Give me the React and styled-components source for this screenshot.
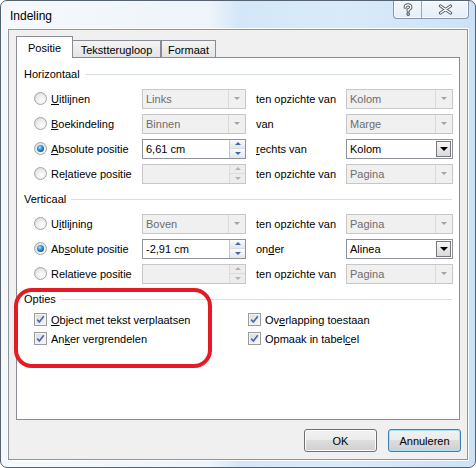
import styled, { createGlobalStyle } from "styled-components";

const GlobalStyle = createGlobalStyle`
  html, body {
    margin: 0;
    background: #fff;
  }
  body {
    font-family: "Liberation Sans", Arial, sans-serif;
    font-size: 11px;
    color: #000;
  }
`;

const Window = styled.div`
  box-sizing: border-box;
  width: 476px;
  height: 468px;
  border: 1px solid #56626f;
  border-radius: 7px;
  background: linear-gradient(
    90deg,
    #f6f9fc 0%,
    #eef4fa 44%,
    #d3e7f8 50%,
    #d9ebfa 72%,
    #cce2f6 100%
  );
  display: flex;
  flex-direction: column;
  overflow: hidden;
`;

const TitleBar = styled.div`
  height: 28px;
  display: flex;
  align-items: center;
  padding: 0 6px 0 9px;
`;

const Title = styled.div`
  font-size: 12px;
  margin-top: 1px;
`;

const CaptionButtons = styled.div`
  margin-left: auto;
  align-self: flex-start;
  display: flex;
  height: 18px;
  box-sizing: border-box;
  border: 1px solid #8795a7;
  border-top: none;
  border-radius: 0 0 4px 4px;
  background: linear-gradient(#f4f8fc, #e3eef9);
  box-shadow: inset 0 0 0 1px rgba(255, 255, 255, 0.7);
  overflow: hidden;
`;

const CaptionButton = styled.div`
  width: ${(p) => p.$w}px;
  display: flex;
  align-items: center;
  justify-content: center;
  & + & {
    border-left: 1px solid #9ba8b8;
  }
`;

const Client = styled.div`
  flex: 1;
  margin: 0 7px 7px;
  background: #f0f0f0;
  border: 1px solid #8e959d;
  box-shadow: 0 0 0 1px rgba(255, 255, 255, 0.9);
  padding: 6px 7px 7px;
  display: flex;
  flex-direction: column;
`;

const TabStrip = styled.div`
  display: flex;
  align-items: flex-end;
  height: 21px;
  position: relative;
  z-index: 1;
`;

const Tab = styled.div`
  box-sizing: border-box;
  width: ${(p) => p.$w}px;
  height: ${(p) => (p.$selected ? 22 : 17)}px;
  margin-bottom: ${(p) => (p.$selected ? -1 : 0)}px;
  margin-left: ${(p) => p.$ml || 0}px;
  border: 1px solid #898c95;
  border-bottom: none;
  background: ${(p) =>
    p.$selected ? "#fff" : "linear-gradient(#f4f4f4, #e4e4e4)"};
  display: flex;
  align-items: center;
  justify-content: center;
  padding-top: ${(p) => (p.$selected ? 0 : 1)}px;
`;

const Panel = styled.div`
  box-sizing: border-box;
  height: 363px;
  background: #fff;
  border: 1px solid #898c95;
  padding: 8px 7px 0 0;
`;

const Section = styled.div`
  position: relative;
  & + & {
    margin-top: 5px;
  }
`;

const Header = styled.div`
  height: 16px;
  display: flex;
  align-items: center;
  padding-left: 7px;
  &::after {
    content: "";
    flex: 1;
    height: 1px;
    margin-left: 5px;
    background: #d5dfe5;
  }
`;

const Rows = styled.div`
  margin-top: 4px;
`;

const Row = styled.div`
  display: grid;
  grid-template-columns: 17px 91px 104px 100px 107px;
  align-items: center;
  height: 25px;
  padding-left: 17px;
`;

const Label2 = styled.span`
  padding-left: 10px;
`;

const Key = styled.span`
  text-decoration: underline;
  text-underline-offset: 1px;
`;

const Radio = styled.span`
  box-sizing: border-box;
  width: 13px;
  height: 13px;
  border-radius: 50%;
  border: 1px solid #a3a5a7;
  background: radial-gradient(circle at 62% 68%, #ffffff 0%, #f0f0f0 40%, #d4d4d4 100%);
  display: flex;
  align-items: center;
  justify-content: center;
  &::after {
    content: "";
    display: ${(p) => (p.$checked ? "block" : "none")};
    width: 7px;
    height: 7px;
    border-radius: 50%;
    background: radial-gradient(circle at 40% 35%, #a6e4ff 0%, #2d93da 40%, #0d4d8e 80%, #0a3565 100%);
  }
`;

const Field = styled.div`
  box-sizing: border-box;
  height: 20px;
  display: flex;
  align-items: stretch;
  border: 1px solid ${(p) => (p.$disabled ? "#c7c7c7" : "#8e9399")};
  background: ${(p) => (p.$disabled ? "#f0f0f0" : "#fff")};
  color: ${(p) => (p.$disabled ? "#6d6d6d" : "#000")};
`;

const FieldText = styled.span`
  flex: 1;
  display: flex;
  align-items: center;
  padding-left: 3px;
`;

const DropButton = styled.span`
  box-sizing: border-box;
  width: ${(p) => (p.$disabled ? 17 : 15)}px;
  margin: ${(p) => (p.$disabled ? "0" : "1px")};
  display: flex;
  align-items: center;
  justify-content: center;
  border: ${(p) => (p.$disabled ? "none" : "1px solid #777")};
  border-left: 1px solid ${(p) => (p.$disabled ? "#dadada" : "#777")};
  background: ${(p) =>
    p.$disabled ? "transparent" : "linear-gradient(#f7f7f7, #d9d9d9)"};
`;

const Arrow = styled.span`
  width: 0;
  height: 0;
  border-left: ${(p) => p.$s}px solid transparent;
  border-right: ${(p) => p.$s}px solid transparent;
  ${(p) => (p.$up ? "border-bottom" : "border-top")}: ${(p) => p.$h}px solid
    ${(p) => p.$c};
`;

const SpinButtons = styled.span`
  width: 15px;
  display: flex;
  flex-direction: column;
  border-left: 1px solid ${(p) => (p.$disabled ? "#dcdcdc" : "#c2c6cc")};
`;

const SpinHalf = styled.span`
  flex: 1;
  display: flex;
  align-items: center;
  justify-content: center;
  background: ${(p) =>
    p.$disabled ? "#ececec" : "linear-gradient(#fbfbfb, #e3e6ea)"};
  & + & {
    border-top: 1px solid ${(p) => (p.$disabled ? "#dcdcdc" : "#c2c6cc")};
  }
`;

const Options = styled.div`
  display: grid;
  grid-template-columns: 214px auto;
  grid-auto-rows: 19px;
  align-items: center;
  padding-left: 17px;
  margin-top: 3px;
`;

const CheckItem = styled.div`
  display: flex;
  align-items: center;
  gap: 4px;
`;

const CheckBox = styled.span`
  box-sizing: border-box;
  width: 13px;
  height: 13px;
  border: 1px solid #9a9b9c;
  background: linear-gradient(135deg, #dadada, #f8f8f8);
  box-shadow: inset 0 0 0 1px #f4f4f4;
  display: flex;
  align-items: center;
  justify-content: center;
`;

const Annotation = styled.div`
  position: absolute;
  left: -3px;
  top: -3px;
  width: 198px;
  height: 80px;
  box-sizing: border-box;
  border: 4px solid #e21b24;
  border-radius: 18px;
  pointer-events: none;
`;

const ButtonRow = styled.div`
  display: flex;
  justify-content: flex-end;
  gap: 11px;
  margin: 9px -1px 0 0;
`;

const Button = styled.button`
  box-sizing: border-box;
  width: 73px;
  height: 23px;
  padding: 0;
  font-family: "Liberation Sans", Arial, sans-serif;
  font-size: 11px;
  color: #000;
  border-radius: 3px;
  border: 1px solid ${(p) => (p.$default ? "#3c7fb1" : "#707070")};
  background: linear-gradient(#f2f2f2 0%, #ebebeb 50%, #dddddd 50%, #cfcfcf 100%);
  box-shadow: inset 0 0 0 1px ${(p) => (p.$default ? "#9fe2fa" : "#fbfbfb")};
`;

const Combo = ({ value, disabled }) => (
  <Field $disabled={disabled}>
    <FieldText>{value}</FieldText>
    <DropButton $disabled={disabled}>
      {disabled ? (
        <Arrow $s={3} $h={3} $c="#a3a3a3" />
      ) : (
        <Arrow $s={4} $h={4} $c="#000" />
      )}
    </DropButton>
  </Field>
);

const Spinner = ({ value, disabled }) => (
  <Field $disabled={disabled}>
    <FieldText>{value}</FieldText>
    <SpinButtons $disabled={disabled}>
      <SpinHalf $disabled={disabled}>
        <Arrow $up $s={3} $h={3} $c={disabled ? "#b3b3b3" : "#3b66b0"} />
      </SpinHalf>
      <SpinHalf $disabled={disabled}>
        <Arrow $s={3} $h={3} $c={disabled ? "#b3b3b3" : "#3b66b0"} />
      </SpinHalf>
    </SpinButtons>
  </Field>
);

const Check = ({ children }) => (
  <CheckItem>
    <CheckBox>
      <svg width="9" height="9" viewBox="0 0 9 9">
        <path
          d="M1.2 4.6 L3.4 7 L7.8 1.2"
          fill="none"
          stroke="#4a65ae"
          strokeWidth="1.6"
        />
      </svg>
    </CheckBox>
    <span>{children}</span>
  </CheckItem>
);

const OutlinedIcon = ({ d, w, h, dot }) => (
  <svg width={w} height={h} viewBox={`0 0 ${w} ${h}`}>
    <path d={d} fill="none" stroke="#5a6069" strokeWidth="3.2" strokeLinecap="round" />
    {dot && <circle cx={dot[0]} cy={dot[1]} r="1.9" fill="#5a6069" />}
    <path d={d} fill="none" stroke="#fff" strokeWidth="1.3" strokeLinecap="round" />
    {dot && <circle cx={dot[0]} cy={dot[1]} r="0.7" fill="#fff" />}
  </svg>
);

const horizontal = [
  {
    label: (
      <>
        <Key>U</Key>itlijnen
      </>
    ),
    ctrl: <Combo value="Links" disabled />,
    label2: "ten opzichte van",
    ctrl2: <Combo value="Kolom" disabled />,
  },
  {
    label: (
      <>
        <Key>B</Key>oekindeling
      </>
    ),
    ctrl: <Combo value="Binnen" disabled />,
    label2: "van",
    ctrl2: <Combo value="Marge" disabled />,
  },
  {
    checked: true,
    label: (
      <>
        <Key>A</Key>bsolute positie
      </>
    ),
    ctrl: <Spinner value="6,61 cm" />,
    label2: (
      <>
        <Key>r</Key>echts van
      </>
    ),
    ctrl2: <Combo value="Kolom" />,
  },
  {
    label: (
      <>
        Re<Key>l</Key>atieve positie
      </>
    ),
    ctrl: <Spinner value="" disabled />,
    label2: "ten opzichte van",
    ctrl2: <Combo value="Pagina" disabled />,
  },
];

const vertical = [
  {
    label: (
      <>
        U<Key>i</Key>tlijning
      </>
    ),
    ctrl: <Combo value="Boven" disabled />,
    label2: "ten opzichte van",
    ctrl2: <Combo value="Pagina" disabled />,
  },
  {
    checked: true,
    label: (
      <>
        Ab<Key>s</Key>olute positie
      </>
    ),
    ctrl: <Spinner value="-2,91 cm" />,
    label2: (
      <>
        on<Key>d</Key>er
      </>
    ),
    ctrl2: <Combo value="Alinea" />,
  },
  {
    label: "Relatieve positie",
    ctrl: <Spinner value="" disabled />,
    label2: "ten opzichte van",
    ctrl2: <Combo value="Pagina" disabled />,
  },
];

const PositionRows = ({ rows }) => (
  <Rows>
    {rows.map((r, i) => (
      <Row key={i}>
        <Radio $checked={r.checked} />
        <span>{r.label}</span>
        {r.ctrl}
        <Label2>{r.label2}</Label2>
        {r.ctrl2}
      </Row>
    ))}
  </Rows>
);

export default function App() {
  return (
    <>
      <GlobalStyle />
      <Window>
        <TitleBar>
          <Title>Indeling</Title>
          <CaptionButtons>
            <CaptionButton $w={27}>
              <OutlinedIcon
                w={10}
                h={13}
                d="M2.2 4.2 Q2.2 1.8 5 1.8 Q7.8 1.8 7.8 4.2 Q7.8 5.8 5.2 6.8 L5.2 8"
                dot={[5.2, 11]}
              />
            </CaptionButton>
            <CaptionButton $w={46}>
              <OutlinedIcon w={15} h={11} d="M2.5 2 L12.5 9 M12.5 2 L2.5 9" />
            </CaptionButton>
          </CaptionButtons>
        </TitleBar>
        <Client>
          <TabStrip>
            <Tab $selected $w={57}>
              Positie
            </Tab>
            <Tab $w={89} $ml={-1}>
              Tekstterugloop
            </Tab>
            <Tab $w={55}>Formaat</Tab>
          </TabStrip>
          <Panel>
            <Section>
              <Header>Horizontaal</Header>
              <PositionRows rows={horizontal} />
            </Section>
            <Section>
              <Header>Verticaal</Header>
              <PositionRows rows={vertical} />
            </Section>
            <Section>
              <Header>Opties</Header>
              <Options>
                <Check>
                  <Key>O</Key>bject met tekst verplaatsen
                </Check>
                <Check>
                  Ov<Key>e</Key>rlapping toestaan
                </Check>
                <Check>
                  An<Key>k</Key>er vergrendelen
                </Check>
                <Check>
                  Opmaak in tabel<Key>c</Key>el
                </Check>
              </Options>
              <Annotation />
            </Section>
          </Panel>
          <ButtonRow>
            <Button>OK</Button>
            <Button $default>Annuleren</Button>
          </ButtonRow>
        </Client>
      </Window>
    </>
  );
}
